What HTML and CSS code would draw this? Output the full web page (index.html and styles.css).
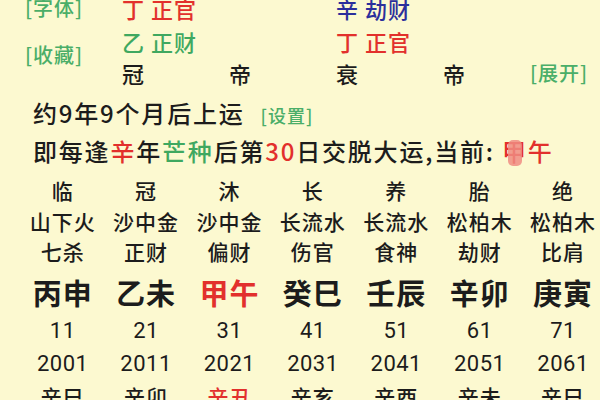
FILE: index.html
```html
<!DOCTYPE html>
<html lang="zh-CN">
<head>
<meta charset="utf-8">
<link rel="stylesheet" href="styles.css">
</head>
<body>
<div class="page">
  <div class="top">
    <div class="side">
      <span class="link">[字体]</span>
      <span class="link link-second">[收藏]</span>
    </div>
    <div class="cell c1 r1 red">丁 正官</div>
    <div class="cell c3 r1 blue">辛 劫财</div>
    <div class="cell c1 r2 green">乙 正财</div>
    <div class="cell c3 r2 red">丁 正官</div>
    <div class="cell c1 r3">冠</div>
    <div class="cell c2 r3">帝</div>
    <div class="cell c3 r3">衰</div>
    <div class="cell c4 r3">帝</div>
    <div class="cell c5 r3 link">[展开]</div>
  </div>

  <div class="info">
    <div class="line line-a">约9年9个月后上运<span class="link small">[设置]</span></div>
    <div class="line">即每逢<span class="red">辛</span>年<span class="green">芒种</span>后第<span class="red">30</span>日交脱大运,当前: <span class="red"><span class="blot">甲</span>午</span></div>
  </div>

  <div class="grid">
    <div class="row row1"><span>临</span><span>冠</span><span>沐</span><span>长</span><span>养</span><span>胎</span><span>绝</span></div>
    <div class="row row2"><span>山下火</span><span>沙中金</span><span>沙中金</span><span>长流水</span><span>长流水</span><span>松柏木</span><span>松柏木</span></div>
    <div class="row row3"><span>七杀</span><span>正财</span><span>偏财</span><span>伤官</span><span>食神</span><span>劫财</span><span>比肩</span></div>
    <div class="row row4"><span>丙申</span><span>乙未</span><span class="red">甲午</span><span>癸巳</span><span>壬辰</span><span>辛卯</span><span>庚寅</span></div>
    <div class="row row5 num"><span>11</span><span>21</span><span>31</span><span>41</span><span>51</span><span>61</span><span>71</span></div>
    <div class="row row6 num"><span>2001</span><span>2011</span><span>2021</span><span>2031</span><span>2041</span><span>2051</span><span>2061</span></div>
    <div class="row row7"><span>辛巳</span><span>辛卯</span><span class="red">辛丑</span><span>辛亥</span><span>辛酉</span><span>辛未</span><span>辛巳</span></div>
  </div>
</div>
</body>
</html>
```

FILE: styles.css
```css
html, body {
  margin: 0;
  padding: 0;
  background: #fcf9d0;
}
body {
  width: 600px;
  height: 400px;
  overflow: hidden;
  font-family: "Noto Sans CJK SC", "Noto Sans", sans-serif;
  font-weight: 500;
  color: #1c1c1c;
}
.page {
  width: 600px;
}
.red { color: #e2302c; }
.green { color: #3fa860; }
.blue { color: #2b2f9c; }
.link { color: #4aae68; }

.top {
  display: grid;
  grid-template-columns: 97px 107px 107px 107px 87px 1fr;
  grid-template-rows: 34px 32px 32px;
  margin-top: -9px;
  padding-left: 25px;
  font-size: 22px;
}
.cell {
  line-height: 32px;
  white-space: nowrap;
  letter-spacing: 1px;
}
.r1 { grid-row: 1; line-height: 34px; }
.r2 { grid-row: 2; }
.r3 { grid-row: 3; }
.c1 { grid-column: 2; }
.c2 { grid-column: 3; }
.c3 { grid-column: 4; }
.c4 { grid-column: 5; }
.c5 { grid-column: 6; font-size: 20px; }
.side {
  grid-column: 1;
  grid-row: 1 / span 3;
  display: flex;
  flex-direction: column;
  font-size: 20px;
  letter-spacing: 1px;
}
.side .link { line-height: 34px; }
.side .link-second { margin-top: 13px; }

.info {
  margin-top: 5px;
  padding-left: 33px;
  font-size: 24px;
  letter-spacing: 1.8px;
}
.line {
  height: 38px;
  line-height: 38px;
  white-space: nowrap;
}
.small {
  font-size: 18px;
  margin-left: 16px;
  letter-spacing: 1px;
}
.blot {
  position: relative;
}
.blot::after {
  content: "";
  position: absolute;
  left: 6px;
  top: 7px;
  width: 14px;
  height: 26px;
  border-radius: 5px;
  background: rgba(240, 140, 130, 0.85);
}

.grid {
  margin-top: 4.5px;
  padding-left: 21px;
}
.row {
  display: grid;
  grid-template-columns: repeat(7, 83.4px);
  text-align: center;
  font-size: 21px;
  white-space: nowrap;
  letter-spacing: 1px;
}
.row1 { height: 31px; line-height: 31px; }
.row2 { height: 30px; line-height: 30px; }
.row3 { height: 31px; line-height: 31px; }
.row4 { height: 51px; line-height: 51px; font-size: 29px; font-weight: 700; letter-spacing: 1px; }
.row5 { height: 25px; line-height: 25px; }
.row6 { height: 41px; line-height: 41px; }
.row7 { height: 24px; line-height: 24px; }
.num {
  font-family: Roboto, "Noto Sans", sans-serif;
  font-weight: 400;
  font-size: 22px;
  letter-spacing: 0.5px;
}
```
